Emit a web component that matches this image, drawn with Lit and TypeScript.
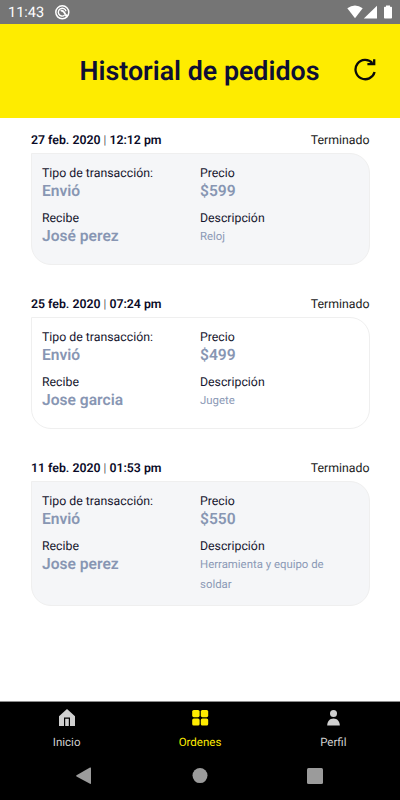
import { LitElement, html, css, svg } from "lit";
import { customElement, property } from "lit/decorators.js";

interface Order {
  date: string;
  time: string;
  status: string;
  type: string;
  price: string;
  receiver: string;
  description: string;
  shaded: boolean;
}

const ORDERS: Order[] = [
  { date: "27 feb. 2020", time: "12:12 pm", status: "Terminado", type: "Envió", price: "$599", receiver: "José perez", description: "Reloj", shaded: true },
  { date: "25 feb. 2020", time: "07:24 pm", status: "Terminado", type: "Envió", price: "$499", receiver: "Jose garcia", description: "Jugete", shaded: false },
  { date: "11 feb. 2020", time: "01:53 pm", status: "Terminado", type: "Envió", price: "$550", receiver: "Jose perez", description: "Herramienta y equipo de soldar", shaded: true },
];

@customElement("order-card")
export class OrderCard extends LitElement {
  @property({ attribute: false }) order!: Order;

  static styles = css`
    :host { display: block; text-rendering: geometricPrecision; }
    .head { display: flex; justify-content: space-between; height: 27px; line-height: 30px; font-size: 12.3px; color: #0b0b28; }
    .when { font-weight: 600; white-space: pre; }
    .bar { font-weight: 300; }
    .status { font-weight: 400; color: #222; padding-right: 0.5px; }
    .card {
      box-sizing: border-box; min-height: 112px; padding: 10px;
      display: grid; grid-template-columns: 158px 150px; align-content: start; row-gap: 7px;
      border: 1px solid #efefef; border-radius: 0 20px 20px 20px;
    }
    .shaded { background: #f5f6f8; }
    .label { height: 18px; line-height: 20px; font-size: 12.3px; font-weight: 400; color: #15152e; }
    .value { height: 20px; line-height: 18px; font-size: 15.6px; font-weight: 600; color: #8896b3; }
    .text { margin-top: -1px; line-height: 20px; font-size: 11.4px; font-weight: 400; color: #8c9ab6; padding-bottom: 1px; }
  `;

  render() {
    const o = this.order;
    return html`
      <div class="head">
        <span class="when">${o.date} <span class="bar">|</span> ${o.time}</span>
        <span class="status">${o.status}</span>
      </div>
      <div class="card ${o.shaded ? "shaded" : ""}">
        <div><div class="label">Tipo de transacción:</div><div class="value">${o.type}</div></div>
        <div><div class="label">Precio</div><div class="value">${o.price}</div></div>
        <div><div class="label">Recibe</div><div class="value">${o.receiver}</div></div>
        <div><div class="label">Descripción</div><div class="text">${o.description}</div></div>
      </div>
    `;
  }
}

const homeIcon = svg`<path fill="currentColor" fill-rule="evenodd" d="M10 1 18 8.200V18H2V8.200ZM7 9.600V18h1.200V10.800h3.600V18H13V9.600Z"/>`;
const gridIcon = svg`<g fill="currentColor"><rect x="2.200" y="2" width="7.400" height="7.200" rx="1.600"/><rect x="10.800" y="2" width="7.400" height="7.200" rx="1.600"/><rect x="2.200" y="10.400" width="7.400" height="7.200" rx="1.600"/><rect x="10.800" y="10.400" width="7.400" height="7.200" rx="1.600"/></g>`;
const userIcon = svg`<g fill="currentColor"><circle cx="10.500" cy="5.400" r="3.500"/><path d="M4.200 17.500C4.200 13.200 6.800 10.400 10.500 10.400s6.300 2.800 6.300 7.100Z"/></g>`;

@customElement("app-root")
export class AppRoot extends LitElement {
  static styles = css`
    :host { display: flex; flex-direction: column; height: 800px; width: 400px; background: #fff; font-family: Roboto, "Liberation Sans", sans-serif; overflow: hidden; text-rendering: geometricPrecision; }
    svg { display: block; flex: none; }
    .system { box-sizing: border-box; height: 24px; padding: 0 8px; display: flex; align-items: center; background: #757575; color: #fff; font-size: 14.5px; }
    .clock { line-height: 24px; padding-top: 2px; }
    .round { margin-left: 11px; }
    .signals { margin-left: auto; }
    .top { height: 94px; display: grid; grid-template-columns: 59px 281px 60px; align-items: center; background: #feec00; }
    h1 { margin: 0; grid-column: 2; text-align: center; font-size: 26.8px; line-height: 32px; font-weight: 600; color: #0e0f35; white-space: nowrap; }
    .refresh { margin: 0 0 4px 13px; }
    .list { flex: 1; padding: 8px 30px 0 31px; display: flex; flex-direction: column; gap: 25px; }
    .tabs { box-sizing: border-box; height: 50px; border-top: 1px solid #8c8c8c; background: #000; display: grid; grid-template-columns: repeat(3, 1fr); color: #d0d0d0; }
    .tab { display: flex; flex-direction: column; align-items: center; padding-top: 6px; font-size: 11.5px; line-height: 14px; gap: 7px; }
    .active { color: #feec00; }
    .keys { height: 49px; background: #000; }
  `;

  render() {
    return html`
      <div class="system">
        <span class="clock">11:43</span>
        <svg class="round" width="16" height="16" viewBox="0 0 16 16" fill="none" stroke="#fff">
          <circle cx="7.300" cy="8.300" r="6.500" stroke-width="1.500"/>
          <path d="M9.600 11.300A3.900 3.900 0 1 1 11 7.200" stroke-width="1.400"/>
          <path d="M5.700 6.800Q8.400 5.700 10.600 10.800" stroke-width="1.800"/>
          <path d="M10.500 10.800 12 12.300" stroke-width="2.200"/>
        </svg>
        <svg class="signals" width="46" height="16" viewBox="346 4 46 16" fill="#fff">
          <path d="M347.300 8.200Q355 2.800 362.700 8.200L355 18.300Z"/>
          <path d="M377 5.700V18.500H363.800Z"/>
          <path d="M386 5.500h4v1.300h1.200q.800 0 .800.800V17.700q0 .800-.800.800h-6.400q-.800 0-.800-.800V7.600q0-.800.800-.800h1.200Z"/>
        </svg>
      </div>
      <div class="top">
        <h1>Historial de pedidos</h1>
        <svg class="refresh" width="24" height="24" viewBox="353 57 24 24" fill="none" stroke="#0a0a0a" stroke-width="2.300">
          <path d="M374.600 72A9.700 9.700 0 1 1 372.400 63"/>
          <path d="M374.200 59.200V64.200H367.400"/>
        </svg>
      </div>
      <div class="list">${ORDERS.map((o) => html`<order-card .order=${o}></order-card>`)}</div>
      <div class="tabs">
        <div class="tab"><svg width="20" height="20" viewBox="0 0 20 20">${homeIcon}</svg>Inicio</div>
        <div class="tab active"><svg width="20" height="20" viewBox="0 0 20 20">${gridIcon}</svg>Ordenes</div>
        <div class="tab"><svg width="20" height="20" viewBox="0 0 20 20">${userIcon}</svg>Perfil</div>
      </div>
      <div class="keys">
        <svg width="400" height="49" viewBox="0 751 400 49" fill="#9b9b9b">
          <path d="M76.500 775.200 90 767.600q1-.4 1 .6v15q0 1-1 .6L76.500 776.400q-.8-.6 0-1.200Z"/>
          <circle cx="200" cy="775.600" r="7.500"/>
          <rect x="307" y="768" width="16" height="16" rx="1.500"/>
        </svg>
      </div>
    `;
  }
}
